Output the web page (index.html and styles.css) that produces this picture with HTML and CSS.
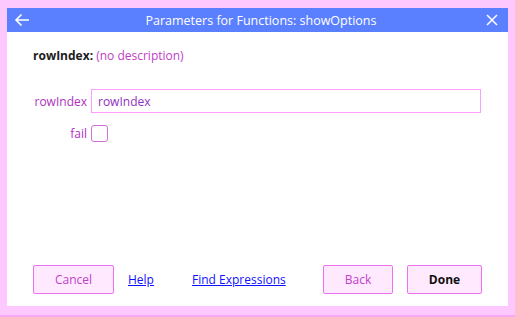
FILE: index.html
```html
<!DOCTYPE html>
<html>
<head>
<meta charset="utf-8">
<link rel="stylesheet" href="styles.css">
</head>
<body>
<div class="frame">
  <div class="dialog">
    <div class="titlebar">
      <span class="tb-btn back"><svg width="16" height="14" viewBox="0 0 16 14"><path d="M15 7H2M7.5 1.5L2 7l5.5 5.5" fill="none" stroke="#fff" stroke-width="1.6"/></svg></span>
      <span class="title">Parameters for Functions: showOptions</span>
      <span class="tb-btn close"><svg width="12" height="12" viewBox="0 0 12 12"><path d="M1 1l10 10M11 1L1 11" fill="none" stroke="#fff" stroke-width="1.5"/></svg></span>
    </div>
    <div class="body">
      <div class="desc"><b>rowIndex:</b> (no description)</div>
      <div class="form">
        <label class="lbl">rowIndex</label>
        <input class="field" type="text" value="rowIndex">
        <label class="lbl">fail</label>
        <span class="check"></span>
      </div>
    </div>
    <div class="footer">
      <button class="btn">Cancel</button>
      <a class="link help" href="#">Help</a>
      <a class="link find" href="#">Find Expressions</a>
      <span class="spacer"></span>
      <button class="btn back-btn">Back</button>
      <button class="btn done">Done</button>
    </div>
  </div>
</div>
</body>
</html>
```
FILE: styles.css
```css
html, body {
  margin: 0;
  padding: 0;
  width: 515px;
  height: 317px;
  overflow: hidden;
  background: #fdc8fd;
  font-family: "Open Sans", "Noto Sans", sans-serif;
}
.frame {
  box-sizing: border-box;
  width: 515px;
  height: 317px;
  padding: 8px 7px 9px 7px;
  border-bottom: 2px solid #f8a8f0;
}
.dialog {
  height: 100%;
  background: #fff;
  display: flex;
  flex-direction: column;
}
.titlebar {
  height: 24px;
  background: #5b80ff;
  color: #fff;
  display: flex;
  align-items: center;
  padding: 0 10px 0 7px;
}
.title {
  flex: 1;
  text-align: center;
  font-size: 12.5px;
  padding-left: 6px;
}
.tb-btn { display: flex; align-items: center; }
.body {
  flex: 1;
  padding: 15px 26px 0 26px;
}
.desc {
  font-size: 12px;
  color: #c040c8;
  height: 20px;
}
.desc b { color: #202020; font-weight: 700; }
.form {
  margin-top: 22px;
  display: grid;
  grid-template-columns: 58px 1fr;
  column-gap: 0;
  row-gap: 12px;
  align-items: center;
}
.lbl {
  text-align: right;
  padding-right: 4px;
  font-size: 12px;
  color: #b030c0;
}
.field {
  box-sizing: border-box;
  height: 24px;
  width: 390px;
  border: 1px solid #ff9cff;
  padding: 0 6px;
  font-family: inherit;
  font-size: 12px;
  color: #9030c0;
  outline: none;
}
.check {
  box-sizing: border-box;
  width: 17px;
  height: 17px;
  border: 1px solid #d070d8;
  border-radius: 3px;
  background: #fff;
}
.footer {
  display: flex;
  align-items: center;
  padding: 0 26px 12px 26px;
}
.btn {
  box-sizing: border-box;
  height: 29px;
  width: 81px;
  background: #ffe9ff;
  border: 1px solid #ee70ee;
  border-radius: 2px;
  font-family: inherit;
  font-size: 12px;
  color: #c040c8;
  padding: 0;
}
.btn.back-btn { width: 70px; margin-right: 14px; }
.btn.done { width: 75px; color: #101010; font-weight: 700; }
.link {
  font-size: 12px;
  color: #1010ff;
  text-decoration: underline;
}
.help { margin-left: 14px; }
.find { margin-left: 38px; }
.spacer { flex: 1; }
```
